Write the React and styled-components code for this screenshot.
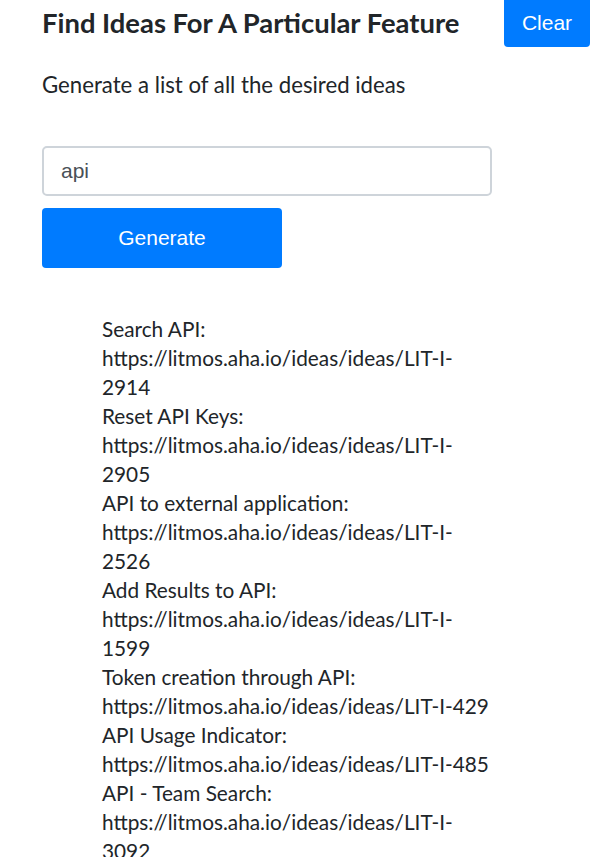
import React from "react";
import styled, { createGlobalStyle } from "styled-components";

const GlobalStyle = createGlobalStyle`
  body {
    margin: 0;
    background: #fff;
    font-family: Lato, "Liberation Sans", sans-serif;
    color: #212529;
  }
`;

const Page = styled.div`
  padding: 0 8px 0 42px;
`;

const Header = styled.div`
  display: flex;
  justify-content: space-between;
  align-items: flex-start;
`;

const Title = styled.h2`
  margin: 6px 0 0;
  font-size: 27.4px;
  font-weight: 700;
  line-height: 34px;
`;

const Button = styled.button`
  background: #007bff;
  color: #fff;
  border: none;
  border-radius: 4px;
  font-family: "Liberation Sans", Arial, sans-serif;
  font-size: 21px;
  cursor: pointer;
`;

const ClearButton = styled(Button)`
  margin-top: -4px;
  padding-top: 4px;
  height: 51px;
  width: 86px;
`;

const Subtitle = styled.p`
  margin: 22px 0 0;
  font-size: 22.2px;
  line-height: 32px;
`;

const Form = styled.div`
  display: flex;
  flex-direction: column;
  align-items: flex-start;
  gap: 12px;
  margin-top: 45px;
`;

const Input = styled.input`
  box-sizing: border-box;
  width: 450px;
  height: 50px;
  padding: 0 17px;
  border: 2px solid #ced4da;
  border-radius: 5px;
  font-family: "Liberation Sans", Arial, sans-serif;
  font-size: 21px;
  color: #495057;
  outline: none;
`;

const GenerateButton = styled(Button)`
  width: 240px;
  height: 60px;
`;

const List = styled.ul`
  list-style: none;
  margin: 46px 0 0;
  padding: 0 0 0 60px;
  width: 390px;
`;

const Item = styled.li`
  font-size: 20.8px;
  line-height: 29px;
  word-break: break-word;
`;

const ideas = [
  ["Search API", "LIT-I-2914"],
  ["Reset API Keys", "LIT-I-2905"],
  ["API to external application", "LIT-I-2526"],
  ["Add Results to API", "LIT-I-1599"],
  ["Token creation through API", "LIT-I-429"],
  ["API Usage Indicator", "LIT-I-485"],
  ["API - Team Search", "LIT-I-3092"],
];

export default function App() {
  return (
    <Page>
      <GlobalStyle />
      <Header>
        <Title>Find Ideas For A Particular Feature</Title>
        <ClearButton>Clear</ClearButton>
      </Header>
      <Subtitle>Generate a list of all the desired ideas</Subtitle>
      <Form>
        <Input defaultValue="api" />
        <GenerateButton>Generate</GenerateButton>
      </Form>
      <List>
        {ideas.map(([name, id]) => (
          <Item key={id}>
            {name}: https://litmos.aha.io/ideas/ideas/{id}
          </Item>
        ))}
      </List>
    </Page>
  );
}
